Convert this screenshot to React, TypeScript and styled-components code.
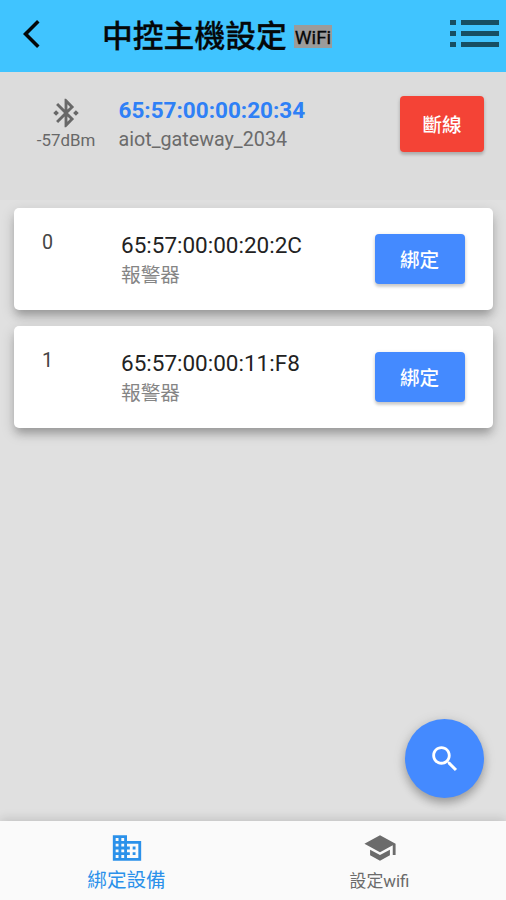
import React from 'react';
import styled, { createGlobalStyle } from 'styled-components';

const GlobalStyle = createGlobalStyle`
  * { box-sizing: border-box; }
  body {
    margin: 0;
    font-family: Roboto, "Noto Sans CJK TC", sans-serif;
    background: #e0e0e0;
  }
  button { font-family: inherit; border: 0; padding: 0; cursor: pointer; }
`;

const Screen = styled.div`
  display: flex;
  flex-direction: column;
  width: 506px;
  height: 900px;
  overflow: hidden;
  background: #e0e0e0;
`;

const Header = styled.header`
  display: flex;
  align-items: center;
  flex: none;
  height: 72px;
  padding: 0 7px 5px 23px;
  background: #40c4ff;
  color: #050708;
`;

const IconButton = styled.button`
  display: flex;
  background: none;
  color: inherit;
`;

const Title = styled.h1`
  flex: 1;
  display: flex;
  align-items: center;
  margin: 6px 0 0 45px;
  font-size: 30.8px;
  line-height: 40px;
  font-weight: 500;
  -webkit-text-stroke: 0.3px currentColor;
  white-space: nowrap;
`;

const WifiTag = styled.span`
  height: 23px;
  margin: 0 0 0 7px;
  padding: 0 1px;
  background: #9b9b9b;
  font-size: 18.9px;
  line-height: 25px;
  font-weight: 400;
`;

const Gateway = styled.section`
  display: flex;
  align-items: flex-start;
  flex: none;
  height: 128px;
  padding: 23px 22px 0 30px;
  background: #dcdcdc;
`;

const Signal = styled.div`
  display: flex;
  flex-direction: column;
  align-items: center;
  width: 72px;
  padding-top: 1px;
  color: #686868;
  font-size: 16.9px;
  line-height: 20px;
`;

const GatewayInfo = styled.div`
  flex: 1;
  margin-left: 16.5px;
`;

const GatewayAddress = styled.div`
  color: #2f80f6;
  font-size: 22.5px;
  line-height: 30px;
  font-weight: 700;
`;

const GatewayName = styled.div`
  color: #6b6b6b;
  font-size: 19.7px;
  line-height: 29px;
`;

const ActionButton = styled.button<{ $danger?: boolean }>`
  width: ${p => (p.$danger ? 84 : 90)}px;
  height: ${p => (p.$danger ? 56 : 50)}px;
  margin-top: ${p => (p.$danger ? 1 : 0)}px;
  padding-top: 3px;
  border-radius: 4px;
  background: ${p => (p.$danger ? '#f44336' : '#448aff')};
  color: #fff;
  font-size: 19.6px;
  line-height: 28px;
  font-weight: 500;
  box-shadow: 0 3px 3px rgba(0, 0, 0, 0.14), 0 1px 4px rgba(0, 0, 0, 0.13);
`;

const DeviceList = styled.main`
  flex: 1;
  display: flex;
  flex-direction: column;
  gap: 16px;
  padding: 8px 13px 0 14px;
`;

const DeviceCard = styled.article`
  display: flex;
  align-items: flex-start;
  flex: none;
  height: 102px;
  padding: 22px 28.5px 0 28px;
  border-radius: 5px;
  background: #fff;
  box-shadow: 0 7px 8px -2px rgba(0, 0, 0, 0.2), 0 5px 14px rgba(0, 0, 0, 0.18);
`;

const DeviceIndex = styled.div`
  width: 79px;
  color: #454545;
  font-size: 19.7px;
  line-height: 25px;
`;

const DeviceInfo = styled.div`
  flex: 1;
`;

const DeviceAddress = styled.div`
  color: #222;
  font-size: 22.5px;
  line-height: 31px;
`;

const DeviceType = styled.div`
  color: #858585;
  font-size: 19.7px;
  line-height: 29px;
`;

const BindSlot = styled.div`
  padding-top: 4px;
`;

const FabRow = styled.div`
  display: flex;
  justify-content: flex-end;
  flex: none;
  padding: 0 22px 23px 0;
`;

const Fab = styled.button`
  display: flex;
  align-items: center;
  justify-content: center;
  width: 79px;
  height: 79px;
  border-radius: 50%;
  background: #448aff;
  color: #fff;
  box-shadow: 0 5px 8px rgba(0, 0, 0, 0.24), 0 2px 14px rgba(0, 0, 0, 0.12);
`;

const TabBar = styled.nav`
  display: grid;
  grid-template-columns: 1fr 1fr;
  flex: none;
  height: 79px;
  background: #fafafa;
  box-shadow: 0 -2px 10px rgba(0, 0, 0, 0.14);
`;

const Tab = styled.button<{ $active?: boolean }>`
  display: flex;
  flex-direction: column;
  align-items: center;
  justify-content: flex-start;
  padding-top: 10px;
  background: none;
  color: ${p => (p.$active ? '#2b91ea' : '#6b6b6b')};
  font-size: ${p => (p.$active ? 19.6 : 16.9)}px;
  line-height: 32px;
`;

const MaterialIcon = ({ d }: { d: string }) => (
  <svg width="34" height="34" viewBox="0 0 24 24" fill="currentColor" aria-hidden="true">
    <path d={d} />
  </svg>
);

const icons = {
  back: 'M11.67 3.87L9.9 2.1 0 12l9.9 9.9 1.77-1.77L3.54 12z',
  bluetooth:
    'M7 12l-2-2-2 2 2 2 2-2zm10.71-4.29L12 2h-1v7.59L6.41 5 5 6.41 10.59 12 5 17.59 6.41 19 11 14.41V22h1l5.71-5.71-4.3-4.29 4.3-4.29zM13 5.83l1.88 1.88L13 9.59V5.83zm1.88 10.46L13 18.17v-3.76l1.88 1.88zM19 10l-2 2 2 2 2-2-2-2z',
  search:
    'M15.5 14h-.79l-.28-.27C15.41 12.59 16 11.11 16 9.5 16 5.91 13.09 3 9.5 3S3 5.91 3 9.5 5.91 16 9.5 16c1.61 0 3.09-.59 4.23-1.57l.27.28v.79l5 4.99L20.49 19l-4.99-5zm-6 0C7.01 14 5 11.99 5 9.5S7.01 5 9.5 5 14 7.01 14 9.5 11.99 14 9.5 14z',
  business:
    'M12 7V3H2v18h20V7H12zM6 19H4v-2h2v2zm0-4H4v-2h2v2zm0-4H4V9h2v2zm0-4H4V5h2v2zm4 12H8v-2h2v2zm0-4H8v-2h2v2zm0-4H8V9h2v2zm0-4H8V5h2v2zm10 12h-8v-2h2v-2h-2v-2h2v-2h-2V9h8v10zm-2-8h-2v2h2v-2zm0 4h-2v2h2v-2z',
  school: 'M5 13.18v4L12 21l7-3.82v-4L12 17l-7-3.82zM12 3L1 9l11 6 9-4.91V17h2V9L12 3z',
};

const ListIcon = () => (
  <svg width="49" height="27" viewBox="0 0 49 27" fill="#174e63" aria-hidden="true">
    <path d="M0 0h6v5H0zM11 0h38v5H11zM0 11h6v5H0zM11 11h38v5H11zM0 22h6v5H0zM11 22h38v5H11z" />
  </svg>
);

const devices = [
  { address: '65:57:00:00:20:2C', type: '報警器' },
  { address: '65:57:00:00:11:F8', type: '報警器' },
];

export default function App() {
  return (
    <>
      <GlobalStyle />
      <Screen>
        <Header>
          <IconButton aria-label="返回"><MaterialIcon d={icons.back} /></IconButton>
          <Title>中控主機設定<WifiTag>WiFi</WifiTag></Title>
          <IconButton aria-label="選單"><ListIcon /></IconButton>
        </Header>
        <Gateway>
          <Signal>
            <MaterialIcon d={icons.bluetooth} />
            -57dBm
          </Signal>
          <GatewayInfo>
            <GatewayAddress>65:57:00:00:20:34</GatewayAddress>
            <GatewayName>aiot_gateway_2034</GatewayName>
          </GatewayInfo>
          <ActionButton $danger>斷線</ActionButton>
        </Gateway>
        <DeviceList>
          {devices.map((device, index) => (
            <DeviceCard key={device.address}>
              <DeviceIndex>{index}</DeviceIndex>
              <DeviceInfo>
                <DeviceAddress>{device.address}</DeviceAddress>
                <DeviceType>{device.type}</DeviceType>
              </DeviceInfo>
              <BindSlot><ActionButton>綁定</ActionButton></BindSlot>
            </DeviceCard>
          ))}
        </DeviceList>
        <FabRow>
          <Fab aria-label="搜尋"><MaterialIcon d={icons.search} /></Fab>
        </FabRow>
        <TabBar>
          <Tab $active><MaterialIcon d={icons.business} />綁定設備</Tab>
          <Tab><MaterialIcon d={icons.school} />設定wifi</Tab>
        </TabBar>
      </Screen>
    </>
  );
}
